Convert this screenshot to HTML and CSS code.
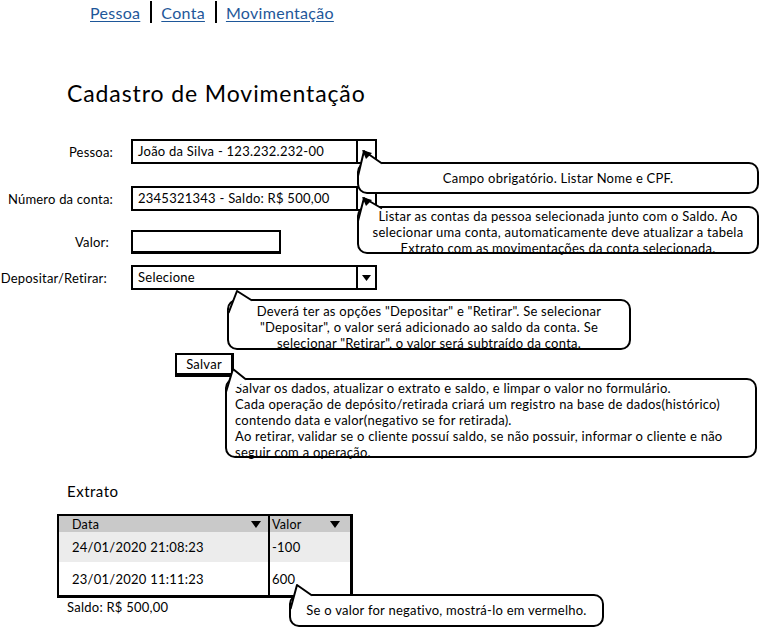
FILE: index.html
```html
<!DOCTYPE html>
<html lang="pt-BR">
<head>
<meta charset="utf-8">
<title>Cadastro de Movimentação</title>
<link rel="stylesheet" href="styles.css">
</head>
<body>
<div class="canvas">
  <nav class="nav">
    <a class="nav-link" href="#">Pessoa</a>
    <span class="nav-sep"></span>
    <a class="nav-link" href="#">Conta</a>
    <span class="nav-sep"></span>
    <a class="nav-link" href="#">Movimentação</a>
  </nav>

  <h1 class="title">Cadastro de Movimentação</h1>

  <div class="form">
    <div class="row row-1">
      <span class="lbl">Pessoa:</span>
      <div class="combo"><span class="combo-val">João da Silva - 123.232.232-00</span><span class="combo-btn"></span></div>
    </div>
    <div class="row row-2">
      <span class="lbl">Número da conta:</span>
      <div class="combo"><span class="combo-val">2345321343 - Saldo: R$ 500,00</span><span class="combo-btn"></span></div>
    </div>
    <div class="row row-3">
      <span class="lbl lbl-valor">Valor:</span>
      <div class="input"></div>
    </div>
    <div class="row row-4">
      <span class="lbl lbl-dep">Depositar/Retirar:</span>
      <div class="combo"><span class="combo-val">Selecione</span><span class="combo-btn"><svg class="tri" width="9" height="6" viewBox="0 0 9 6"><path d="M0 0 L9 0 L4.5 6 Z" fill="#000"/></svg></span></div>
    </div>
  </div>

  <div class="save">Salvar</div>

  <h2 class="sub">Extrato</h2>

  <div class="table">
    <div class="tr th">
      <div class="td c1">Data <svg class="tri-h" width="10" height="7" viewBox="0 0 10 7"><path d="M0 0 L10 0 L5 7 Z" fill="#000"/></svg></div>
      <div class="td c2">Valor <svg class="tri-h" width="10" height="7" viewBox="0 0 10 7"><path d="M0 0 L10 0 L5 7 Z" fill="#000"/></svg></div>
    </div>
    <div class="tr odd">
      <div class="td c1">24/01/2020 21:08:23</div>
      <div class="td c2">-100</div>
    </div>
    <div class="tr even">
      <div class="td c1">23/01/2020 11:11:23</div>
      <div class="td c2">600</div>
    </div>
  </div>

  <p class="saldo">Saldo: R$ 500,00</p>

  <div class="callout co-1">Campo obrigatório. Listar Nome e CPF.</div>
  <div class="callout co-2">Listar as contas da pessoa selecionada junto com o Saldo. Ao<br>selecionar uma conta, automaticamente deve atualizar a tabela<br>Extrato com as movimentações da conta selecionada.</div>
  <div class="callout co-3">Deverá ter as opções "Depositar" e "Retirar". Se selecionar<br>"Depositar", o valor será adicionado ao saldo da conta. Se<br>selecionar "Retirar", o valor será subtraído da conta.</div>
  <div class="callout co-4">Salvar os dados, atualizar o extrato e saldo, e limpar o valor no formulário.<br>Cada operação de depósito/retirada criará um registro na base de dados(histórico)<br>contendo data e valor(negativo se for retirada).<br>Ao retirar, validar se o cliente possuí saldo, se não possuir, informar o cliente e não<br>seguir com a operação.</div>
  <div class="callout co-5">Se o valor for negativo, mostrá-lo em vermelho.</div>

  <svg class="tails" width="762" height="629" viewBox="0 0 762 629">
    <g fill="#fff" stroke="none">
      <path d="M358 174 L364 151 L382 163.5 L372 172 Z"/>
      <path d="M358 219 L364 198 L382 208.5 L372 218 Z"/>
      <path d="M228.5 311 L237 291 L252 300.5 L240 310 Z"/>
      <path d="M226 390 L233 369 L246 379.5 L236 388 Z"/>
      <path d="M290.5 607 L297 585 L312 595.5 L302 605 Z"/>
    </g>
    <g fill="none" stroke="#000" stroke-width="2" stroke-linejoin="round">
      <path d="M358 176 L364 151 L382 163.5"/>
      <path d="M358 221 L364 198 L382 208.5"/>
      <path d="M228.5 313 L237 291 L252 300.5"/>
      <path d="M226 392 L233 369 L246 379.5"/>
      <path d="M290.5 609 L297 585 L312 595.5"/>
    </g>
    <g fill="#000">
      <path d="M362 150 L372 153 L366 159 Z"/>
      <path d="M362 197 L372 200 L366 206 Z"/>
    </g>
  </svg>
</div>
</body>
</html>
```
FILE: styles.css
```css
* { box-sizing: border-box; }

html, body {
  margin: 0;
  padding: 0;
  background: #fff;
}

.canvas {
  position: relative;
  width: 762px;
  height: 629px;
  overflow: hidden;
  font-family: Lato, "Noto Sans", sans-serif;
  color: #000;
}

/* nav */
.nav {
  display: flex;
  align-items: center;
  height: 24px;
  padding-left: 90px;
}
.nav-link {
  font-size: 16px;
  color: #1e5799;
  text-decoration: underline;
  text-underline-offset: 2px;
  letter-spacing: 0.3px;
}
.nav-sep {
  width: 2px;
  height: 22px;
  background: #000;
  margin: 0 9px 0 10px;
}

/* title */
.title {
  margin: 55px 0 0 67px;
  font-size: 23px;
  font-weight: 400;
  line-height: 28px;
  letter-spacing: 0.9px;
}

/* form */
.form {
  display: flex;
  flex-direction: column;
}
.row {
  display: grid;
  grid-template-columns: 113px auto;
  column-gap: 18px;
  align-items: center;
}
.row-1 { margin-top: 32px; }
.row-2 { margin-top: 22px; }
.row-3 { margin-top: 19px; }
.row-4 { margin-top: 11px; }

.lbl {
  font-size: 13px;
  letter-spacing: 0.2px;
  text-align: right;
  white-space: nowrap;
}
.lbl-valor { padding-right: 4px; }
.lbl-dep { padding-right: 6px; }

.combo {
  width: 246px;
  height: 25px;
  border: 2px solid #000;
  display: flex;
  background: #fff;
}
.combo-val {
  flex: 1;
  font-size: 13px;
  letter-spacing: 0.25px;
  line-height: 21px;
  padding-left: 5px;
  white-space: nowrap;
}
.combo-btn {
  width: 19px;
  border-left: 2px solid #000;
  display: flex;
  align-items: center;
  justify-content: center;
}

.input {
  width: 150px;
  height: 24px;
  border: 2px solid #000;
  border-left-width: 2.5px;
  border-bottom-width: 3px;
  background: #fff;
}

/* save button */
.save {
  margin: 63px 0 0 175px;
  width: 59px;
  height: 24px;
  border: 2px solid #000;
  border-right-width: 3px;
  border-bottom-width: 4px;
  font-size: 13px;
  letter-spacing: 0.25px;
  line-height: 18px;
  text-align: center;
}

/* extrato */
.sub {
  margin: 104px 0 0 67px;
  font-size: 15px;
  font-weight: 400;
  line-height: 20px;
  letter-spacing: 0.5px;
}

.table {
  margin: 13px 0 0 57px;
  width: 296px;
  border: 2px solid #000;
  border-bottom-width: 3px;
  border-right-width: 3px;
}
.tr {
  display: grid;
  grid-template-columns: 209px auto;
}
.td {
  font-size: 13px;
  letter-spacing: 0.25px;
  padding-left: 13px;
  display: flex;
  align-items: center;
}
.c2 {
  border-left: 2px solid #000;
  padding-left: 2px;
}
.th .td { height: 16px; background: #c9c9c9; font-size: 12.5px; }
.odd .td { height: 30px; background: #ececec; }
.even .td { height: 33px; background: #fff; }
.th .c1 { padding-right: 7px; }
.th .c2 { padding-right: 10px; }
.tri-h { margin-left: auto; }

.saldo {
  margin: 1px 0 0 67px;
  font-size: 13px;
  letter-spacing: 0.25px;
  line-height: 16px;
}

/* callouts */
.callout {
  position: absolute;
  background: #fff;
  border: 2px solid #000;
  border-radius: 10px;
  font-size: 13px;
  letter-spacing: 0.25px;
  line-height: 16px;
  text-align: center;
  white-space: nowrap;
}
.co-1 { left: 357px; top: 162px; width: 402px; height: 32px; padding-top: 6px; }
.co-2 { left: 357px; top: 206px; width: 402px; height: 48px; padding-top: 0; }
.co-3 { left: 227px; top: 299px; width: 404px; height: 51px; padding-top: 2px; }
.co-4 { left: 225px; top: 378px; width: 532px; height: 80px; padding: 0 0 0 8px; text-align: left; }
.co-5 { left: 289px; top: 594px; width: 315px; height: 33px; padding-top: 6px; }

.tails {
  position: absolute;
  left: 0;
  top: 0;
  pointer-events: none;
}
```
